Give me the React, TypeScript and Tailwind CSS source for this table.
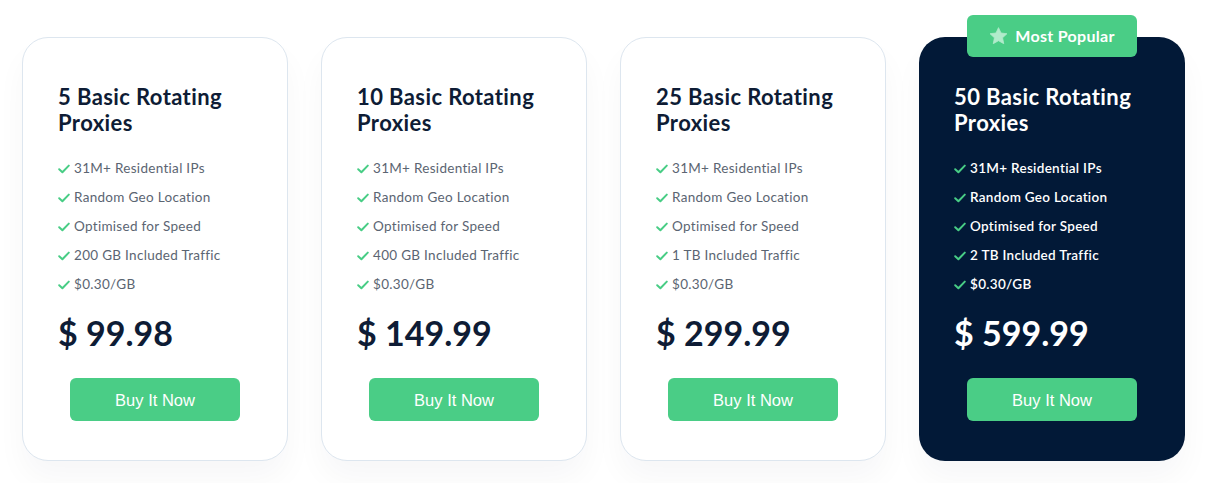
import clsx from "clsx";

type Plan = {
  count: number;
  traffic: string;
  price: string;
  featured?: boolean;
};

const plans: Plan[] = [
  { count: 5, traffic: "200 GB", price: "99.98" },
  { count: 10, traffic: "400 GB", price: "149.99" },
  { count: 25, traffic: "1 TB", price: "299.99" },
  { count: 50, traffic: "2 TB", price: "599.99", featured: true },
];

function Check() {
  return (
    <svg width="12" height="10" viewBox="0 0 12 10" fill="none" className="shrink-0">
      <path
        d="M1.2 5.2 L4.4 8.2 L10.8 1.6"
        stroke="#48cd85"
        strokeWidth="2"
        strokeLinecap="round"
        strokeLinejoin="round"
      />
    </svg>
  );
}

function Star() {
  return (
    <svg width="19" height="18" viewBox="0 0 24 23">
      <path
        d="M12 0.8 L15.2 7.7 L22.8 8.6 L17.2 13.8 L18.7 21.3 L12 17.5 L5.3 21.3 L6.8 13.8 L1.2 8.6 L8.8 7.7 Z"
        fill="#b1ebcb"
        stroke="#b1ebcb"
        strokeWidth="1"
        strokeLinejoin="round"
      />
    </svg>
  );
}

function PlanCard({ plan }: { plan: Plan }) {
  const dark = plan.featured;
  const features = [
    "31M+ Residential IPs",
    "Random Geo Location",
    "Optimised for Speed",
    `${plan.traffic} Included Traffic`,
    "$0.30/GB",
  ];

  return (
    <div className="relative w-[266px] shrink-0">
      {dark && (
        <div className="absolute -top-[22px] left-[48px] z-10 flex h-[42px] w-[170px] items-center justify-center gap-[7px] rounded-[6px] bg-[#4acd86] text-[16px] font-bold tracking-[0.3px] text-white">
          <Star />
          <span>Most Popular</span>
        </div>
      )}
      <div
        className={clsx(
          "flex h-[424px] flex-col rounded-[26px] px-[35px]",
          "shadow-[0_18px_30px_rgba(20,40,70,0.035)]",
          dark
            ? "bg-[#021937] pt-[47px] pb-[40px]"
            : "border border-[#dde6ef] bg-white pt-[46px] pb-[39px]"
        )}
      >
        <h3
          className={clsx(
            "text-[22px] font-bold leading-[26px] tracking-[0.4px]",
            dark ? "text-white" : "text-[#0e1c35]"
          )}
        >
          {plan.count} Basic Rotating Proxies
        </h3>

        <ul className="mt-[18px] flex flex-col">
          {features.map((f) => (
            <li
              key={f}
              className={clsx(
                "flex h-[29px] items-center gap-[4px] text-[13.5px] tracking-[0.3px]",
                dark ? "font-semibold text-white" : "text-[#5b6572]"
              )}
            >
              <Check />
              <span>{f}</span>
            </li>
          ))}
        </ul>

        <div
          className={clsx(
            "mt-[14px] text-[34px] font-bold leading-[40px]",
            dark ? "text-white" : "text-[#0e1c35]"
          )}
        >
          $ {plan.price}
        </div>

        <button className="mx-auto mt-auto flex h-[43px] w-[170px] items-center justify-center rounded-[6px] bg-[#4acd86] pt-[1px] text-[16.5px] text-white font-['Liberation_Sans',Arial,sans-serif]">
          Buy It Now
        </button>
      </div>
    </div>
  );
}

export default function App() {
  return (
    <div className="min-h-[483px] bg-white font-['Lato','Noto_Sans',sans-serif]">
      <div className="flex gap-[33px] pl-[22px] pt-[37px]">
        {plans.map((p) => (
          <PlanCard key={p.count} plan={p} />
        ))}
      </div>
    </div>
  );
}
